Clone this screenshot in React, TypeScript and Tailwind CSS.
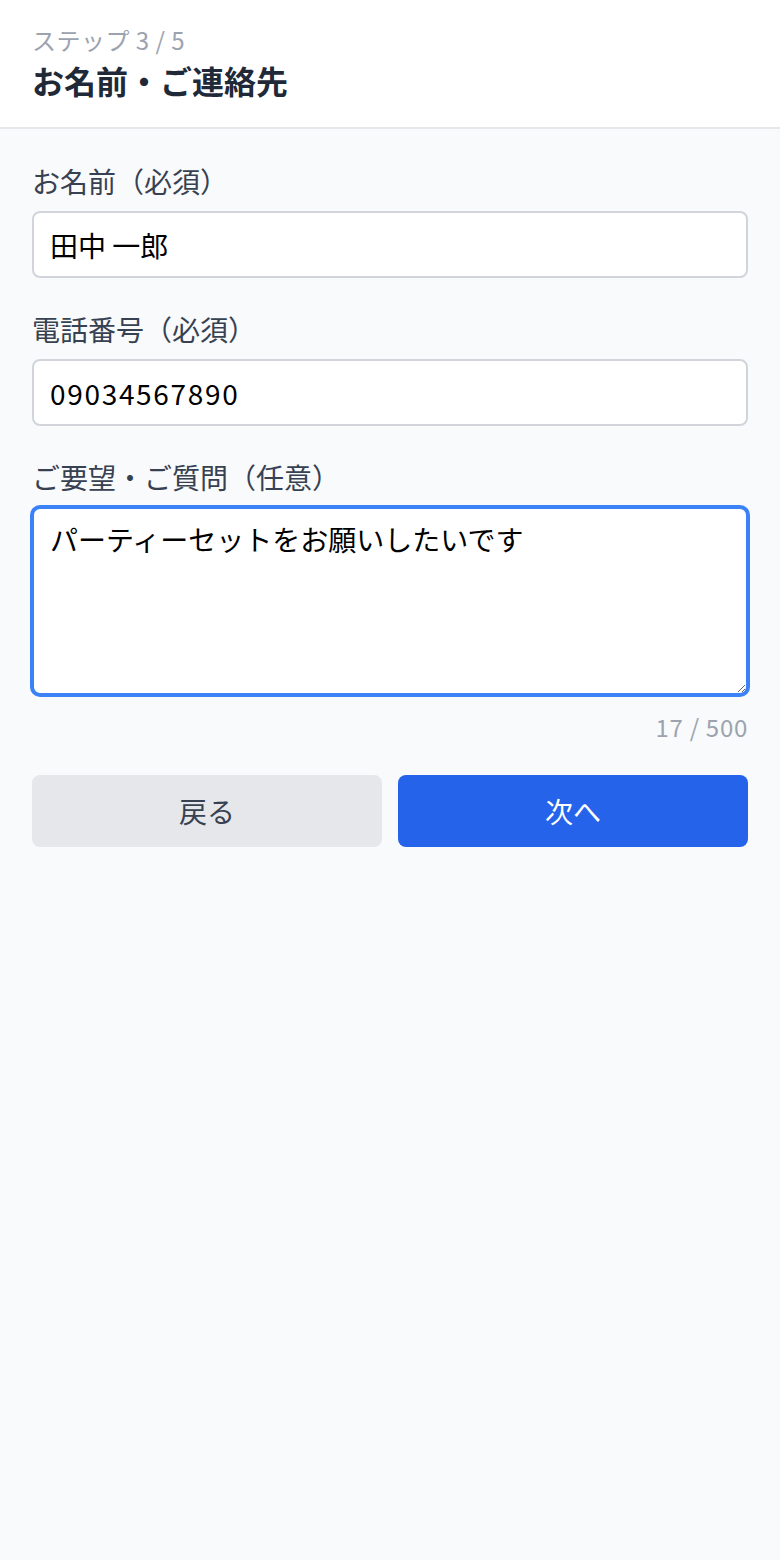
import React, { useState } from "react";

const font = { fontFamily: '"Noto Sans CJK JP", "Liberation Sans", sans-serif' };

function Field({ label, children }: { label: string; children: React.ReactNode }) {
  return (
    <div className="flex flex-col">
      <label className="text-[28px] leading-[40px] text-[#374151] mb-[10px]">{label}</label>
      {children}
    </div>
  );
}

export default function App() {
  const [name, setName] = useState("田中 一郎");
  const [phone, setPhone] = useState("09034567890");
  const [note, setNote] = useState("パーティーセットをお願いしたいです");

  return (
    <div className="min-h-[1560px] bg-[#f9fafb] flex flex-col" style={font}>
      <header className="bg-white border-b-2 border-[#e5e7eb] px-8 pt-6 pb-[23px]">
        <p className="text-[24px] leading-[32px] tracking-[0.02em] text-[#9ca3af]">ステップ 3 / 5</p>
        <h1 className="text-[32px] leading-[48px] font-bold text-[#1f2937]">お名前・ご連絡先</h1>
      </header>

      <main className="px-8 pt-8 flex flex-col gap-[31px]">
        <Field label="お名前（必須）">
          <input
            value={name}
            onChange={(e) => setName(e.target.value)}
            className="h-[67px] w-full rounded-lg border-2 border-[#d1d5db] bg-white px-4 text-[28px] text-black outline-none"
          />
        </Field>

        <Field label="電話番号（必須）">
          <input
            value={phone}
            onChange={(e) => setPhone(e.target.value)}
            className="h-[67px] w-full rounded-lg border-2 border-[#d1d5db] bg-white px-4 text-[28px] tracking-[0.06em] text-black outline-none"
          />
        </Field>

        <div className="flex flex-col">
          <Field label="ご要望・ご質問（任意）">
            <textarea
              value={note}
              onChange={(e) => setNote(e.target.value)}
              rows={4}
              className="h-[188px] w-full rounded-lg border-2 border-[#3b82f6] ring-2 ring-[#3b82f6] bg-white px-4 py-[10px] text-[28px] leading-[40px] text-black outline-none"
            />
          </Field>
          <p className="mt-4 text-right text-[24px] leading-[32px] tracking-[0.03em] text-[#9ca3af]">{note.length} / 500</p>
          <div className="mt-8 grid grid-cols-2 gap-4">
            <button className="h-[72px] rounded-lg bg-[#e5e7eb] text-[28px] text-[#374151]">戻る</button>
            <button className="h-[72px] rounded-lg bg-[#2563eb] text-[28px] text-white">次へ</button>
          </div>
        </div>
      </main>
    </div>
  );
}
